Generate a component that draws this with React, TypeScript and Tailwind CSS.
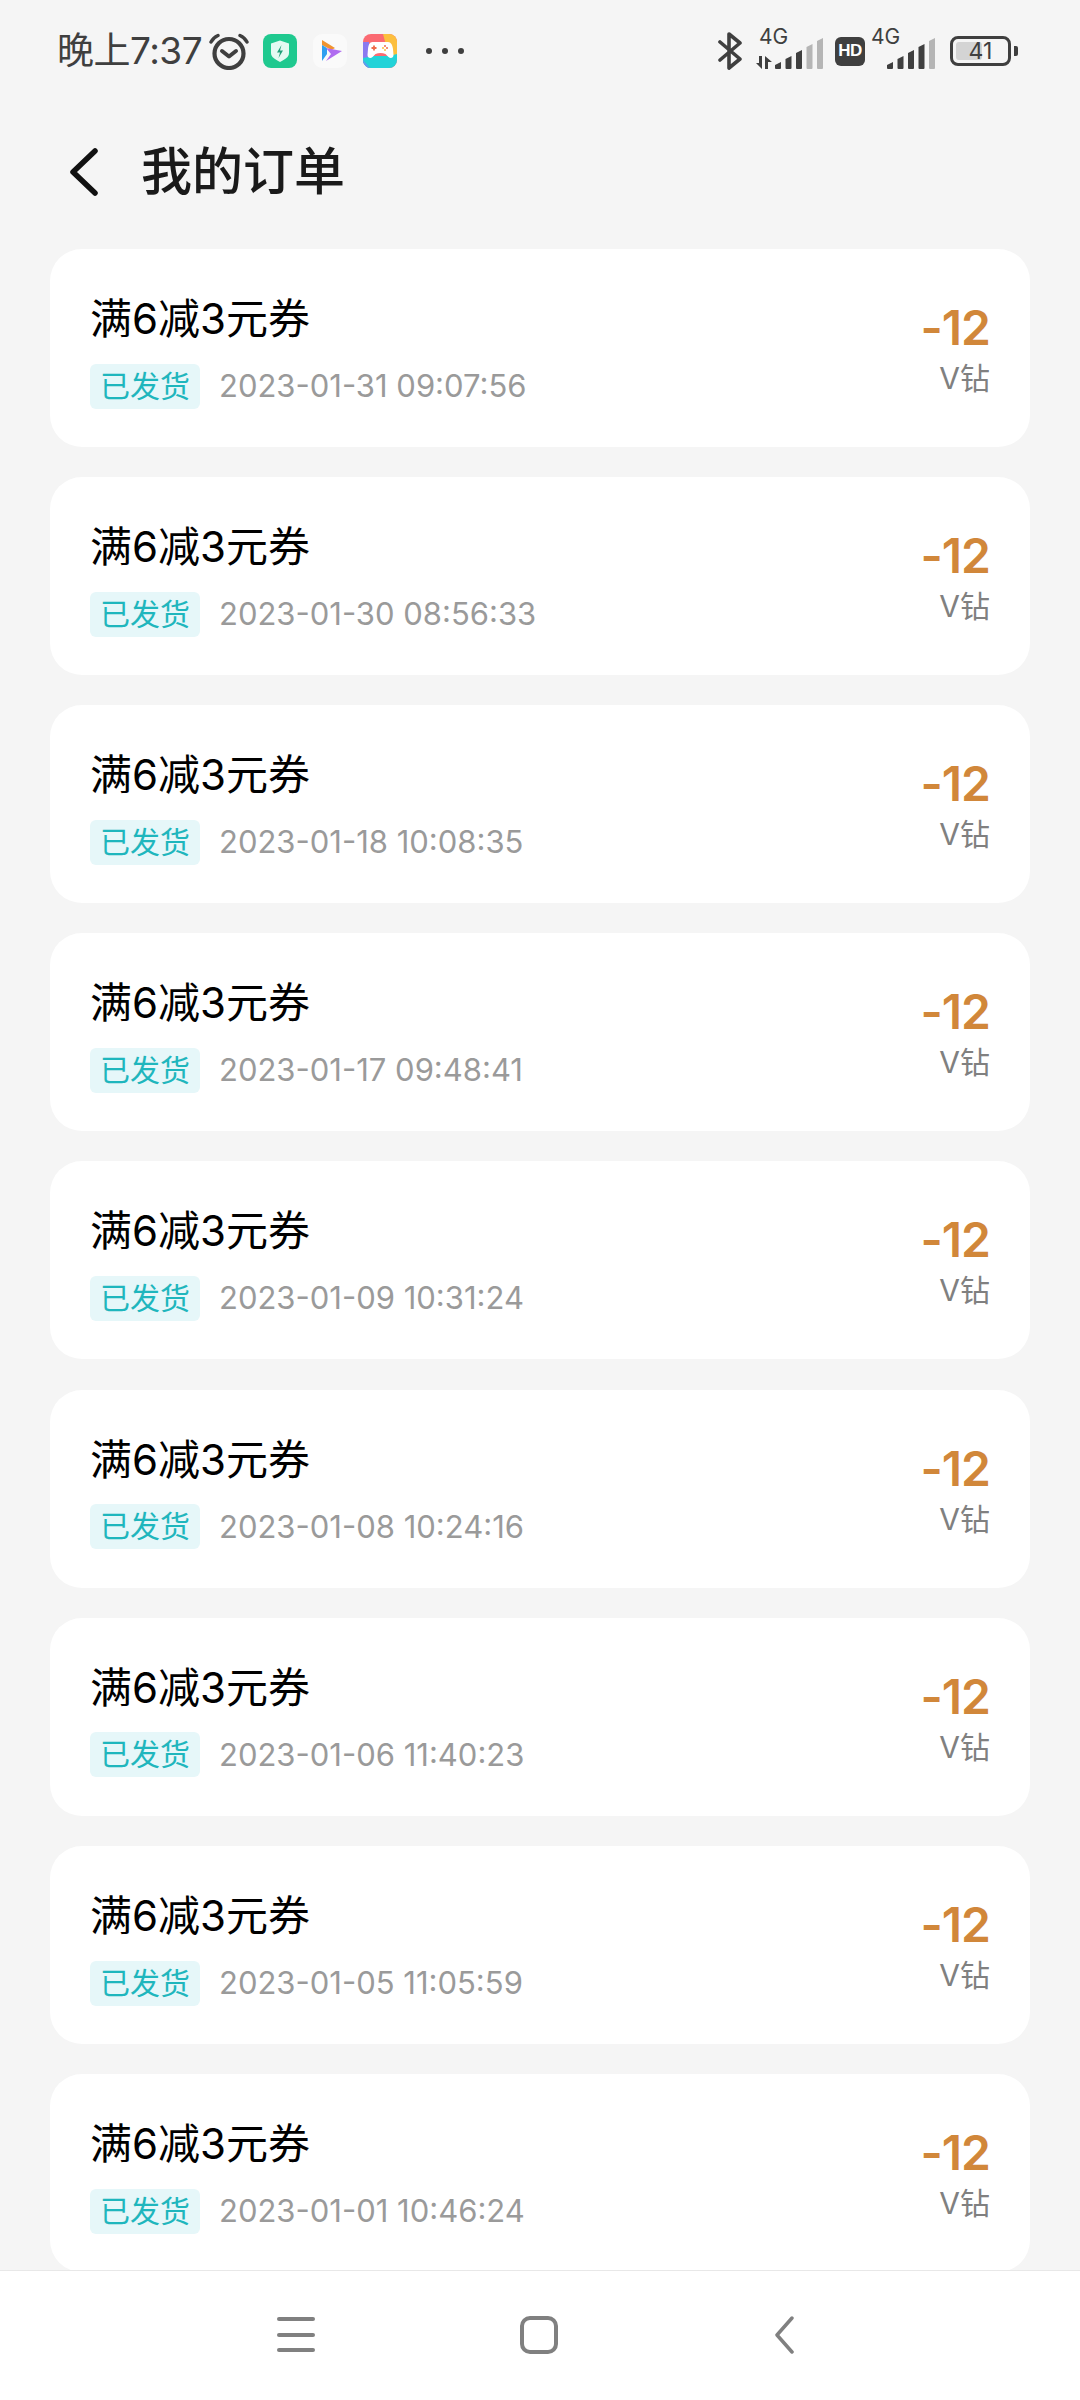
const orders = [
  '2023-01-31 09:07:56',
  '2023-01-30 08:56:33',
  '2023-01-18 10:08:35',
  '2023-01-17 09:48:41',
  '2023-01-09 10:31:24',
  '2023-01-08 10:24:16',
  '2023-01-06 11:40:23',
  '2023-01-05 11:05:59',
  '2023-01-01 10:46:24',
];

const fontStack = "font-['Inter','Noto_Sans_CJK_SC',sans-serif]";

function Alarm() {
  return (
    <svg width="40" height="37" viewBox="0 0 40 37" fill="none" stroke="#3f3f3f" strokeLinecap="round" strokeLinejoin="round">
      <circle cx="20" cy="20.500" r="14.500" strokeWidth="4.200" />
      <path d="M13 18l7 5.500 7-5.500" strokeWidth="4" />
      <path d="M2 9c1.500-3 3.500-5 7-6.500M38 9c-1.500-3-3.500-5-7-6.500" strokeWidth="3.400" />
    </svg>
  );
}

function ShieldApp() {
  return (
    <svg width="34" height="34" viewBox="0 0 34 34">
      <rect width="34" height="34" rx="8" fill="#1fc98f" />
      <path d="M17 6.500l9 3v9.500c0 4-4 6.500-9 9-5-2.500-9-5-9-9V9.500z" fill="#e4faf2" />
      <path d="M18.500 11l-4.500 7.500h3l-1.500 5.500 4.500-7.500h-3z" fill="#1f9f78" />
    </svg>
  );
}

function PlayApp() {
  return (
    <svg width="34" height="34" viewBox="0 0 34 34">
      <rect width="34" height="34" rx="9" fill="#fafafa" />
      <path d="M9 6l13 8-3.500 2L9 11z" fill="#f0932f" />
      <path d="M9 11l5 3v6l-5 7z" fill="#2f9ff0" />
      <path d="M13 14l16 3-16 10 5-7z" fill="#b06cf0" />
    </svg>
  );
}

function GameApp() {
  return (
    <svg width="34" height="34" viewBox="0 0 34 34">
      <defs>
        <clipPath id="game-clip">
          <rect width="34" height="34" rx="8" />
        </clipPath>
      </defs>
      <g clipPath="url(#game-clip)">
        <rect width="34" height="34" fill="#fb6a72" />
        <path d="M20 0h14v22h-8z" fill="#fcbf3e" />
        <path d="M0 8h6v26H0z" fill="#8a7af0" />
        <path d="M0 24l10-2 16 0 8-2v14H0z" fill="#22d3d8" />
        <path d="M0 26l7 8H0z" fill="#5e9cf0" />
      </g>
      <path d="M9 8h16c3 0 4.500 3 5 7l.5 6c0 3-3 4-5 2l-3-3c-3-1.500-7-1.500-10 0l-3 3c-2 2-5 1-5-2l.5-6c.5-4 1.500-7 4.500-7z" fill="#ffffff" />
      <path d="M8.500 14h5M11 11.500v5" stroke="#ef6a4a" strokeWidth="1.800" />
      <circle cx="22" cy="12" r="1" fill="#ef6a4a" />
      <circle cx="22" cy="16" r="1" fill="#fbbe3c" />
      <circle cx="20" cy="14" r="1" fill="#fbbe3c" />
      <circle cx="24" cy="14" r="1" fill="#ef6a4a" />
    </svg>
  );
}

function Bluetooth() {
  return (
    <svg width="24" height="40" viewBox="0 0 24 40" fill="none" stroke="#3f3f3f" strokeWidth="3.600" strokeLinecap="round" strokeLinejoin="round">
      <path d="M2 11l20 17-11 9V3l11 9L2 29" />
    </svg>
  );
}

function Signal({ dim, arrows }: { dim: number; arrows?: boolean }) {
  const heights = [7, 13, 19, 25, 31];
  return (
    <div className="relative flex h-[36px] w-[64px] items-end justify-end">
      <span className="absolute left-0 top-[-7px] font-['Inter',sans-serif] text-[21px] leading-[22px] text-[#3f3f3f]">4G</span>
      {arrows && (
        <svg className="absolute bottom-0 left-[-3px]" width="16" height="13" viewBox="0 0 16 13" fill="#3f3f3f">
          <path d="M0 7h3V0h3v13zM9 0v13h3V6h4z" />
        </svg>
      )}
      <svg width="48" height="31" viewBox="0 0 48 31">
        {heights.map((h, i) => (
          <path
            key={i}
            d={`M${i * 10.5} ${31 - h + 3}l6 -3v${h - 1}a1 1 0 0 1 -1 1h-4a1 1 0 0 1 -1 -1z`}
            fill={i >= 5 - dim ? '#b5b5b5' : '#3f3f3f'}
          />
        ))}
      </svg>
    </div>
  );
}

function StatusBar() {
  return (
    <div className={`flex h-[104px] items-center justify-between pb-[2px] pl-[57px] pr-[69px] ${fontStack}`}>
      <div className="flex items-center">
        <span className="text-[37px] leading-[40px] tracking-[-0.5px] text-[#3f3f3f]">晚上7:37</span>
        <div className="ml-[7px] flex items-center">
          <Alarm />
          <div className="ml-[14px]"><ShieldApp /></div>
          <div className="ml-[16px]"><PlayApp /></div>
          <div className="ml-[16px]"><GameApp /></div>
        </div>
        <div className="ml-[29px] flex gap-[10px]">
          <span className="h-[6px] w-[6px] rounded-full bg-[#3f3f3f]" />
          <span className="h-[6px] w-[6px] rounded-full bg-[#3f3f3f]" />
          <span className="h-[6px] w-[6px] rounded-full bg-[#3f3f3f]" />
        </div>
      </div>
      <div className="flex items-center">
        <Bluetooth />
        <div className="ml-[17px]"><Signal dim={2} arrows /></div>
        <span className="ml-[12px] flex h-[29px] w-[30px] items-center justify-center rounded-[6px] bg-[#3f3f3f] font-['Liberation_Sans',sans-serif] text-[17px] font-bold tracking-[-0.5px] text-white">HD</span>
        <div className="ml-[6px]"><Signal dim={1} /></div>
        <div className="relative ml-[15px] flex h-[30px] w-[61px] items-center justify-center rounded-[8px] border-[3px] border-[#3f3f3f]">
          <div className="absolute left-[3px] top-[3px] h-[18px] w-[26px] rounded-[3px] bg-[#d4d4d4]" />
          <span className="relative text-[23px] leading-[24px] text-[#3f3f3f]">41</span>
          <span className="absolute right-[-10px] top-[7px] h-[10px] w-[4px] rounded-r-[2px] bg-[#3f3f3f]" />
        </div>
      </div>
    </div>
  );
}

function OrderCard({ time }: { time: string }) {
  return (
    <div className="flex h-[198px] shrink-0 items-start justify-between rounded-[32px] bg-white pl-[40px] pr-[40px]">
      <div className="pt-[46px]">
        <div className="text-[42px] leading-[48px] text-black">满6减3元券</div>
        <div className="mt-[20px] flex items-center">
          <span className="flex h-[45px] w-[110px] items-center justify-center rounded-[6px] bg-[#e6f7f9] text-[30px] text-[#1fb6bd]">已发货</span>
          <span className="ml-[19px] text-[31px] text-[#9a9a9a]">{time}</span>
        </div>
      </div>
      <div className="flex flex-col items-end pt-[51px]">
        <span className="text-[48px] font-semibold leading-[56px] tracking-[-1px] text-[#d1873a]">-12</span>
        <span className="mt-[4px] text-[30px] leading-[36px] text-[#808080]">V钻</span>
      </div>
    </div>
  );
}

function NavBar() {
  return (
    <div className="flex h-[130px] shrink-0 items-center border-t border-[#e8e8e8] bg-white pb-[2px] pl-[277px]">
      <div className="flex h-[35px] w-[38px] flex-col justify-between">
        <span className="h-[4px] rounded-[2px] bg-[#808080]" />
        <span className="h-[4px] rounded-[2px] bg-[#808080]" />
        <span className="h-[4px] rounded-[2px] bg-[#808080]" />
      </div>
      <div className="ml-[205px] h-[38px] w-[38px] rounded-[10px] border-[4px] border-[#808080]" />
      <svg className="ml-[216px]" width="20" height="38" viewBox="0 0 20 38" fill="none" stroke="#808080" strokeWidth="3.500" strokeLinecap="round" strokeLinejoin="round">
        <path d="M18 2L3 19l15 17" />
      </svg>
    </div>
  );
}

export default function App() {
  return (
    <div className={`flex h-[2400px] w-[1080px] flex-col overflow-hidden bg-[#f5f5f5] ${fontStack}`}>
      <StatusBar />
      <div className="flex h-[145px] shrink-0 items-start pl-[70px] pt-[36px]">
        <svg className="mt-[8px]" width="30" height="48" viewBox="0 0 30 48" fill="none" stroke="#111111" strokeWidth="5.500" strokeLinecap="round" strokeLinejoin="round">
          <path d="M25 3L3 24l22 21" />
        </svg>
        <span className="ml-[41px] text-[51px] font-medium leading-[64px] text-[#1a1a1a]">我的订单</span>
      </div>
      <div className="flex min-h-0 flex-1 flex-col gap-[30.120px] overflow-hidden px-[50px]">
        {orders.map(t => (
          <OrderCard key={t} time={t} />
        ))}
      </div>
      <NavBar />
    </div>
  );
}
